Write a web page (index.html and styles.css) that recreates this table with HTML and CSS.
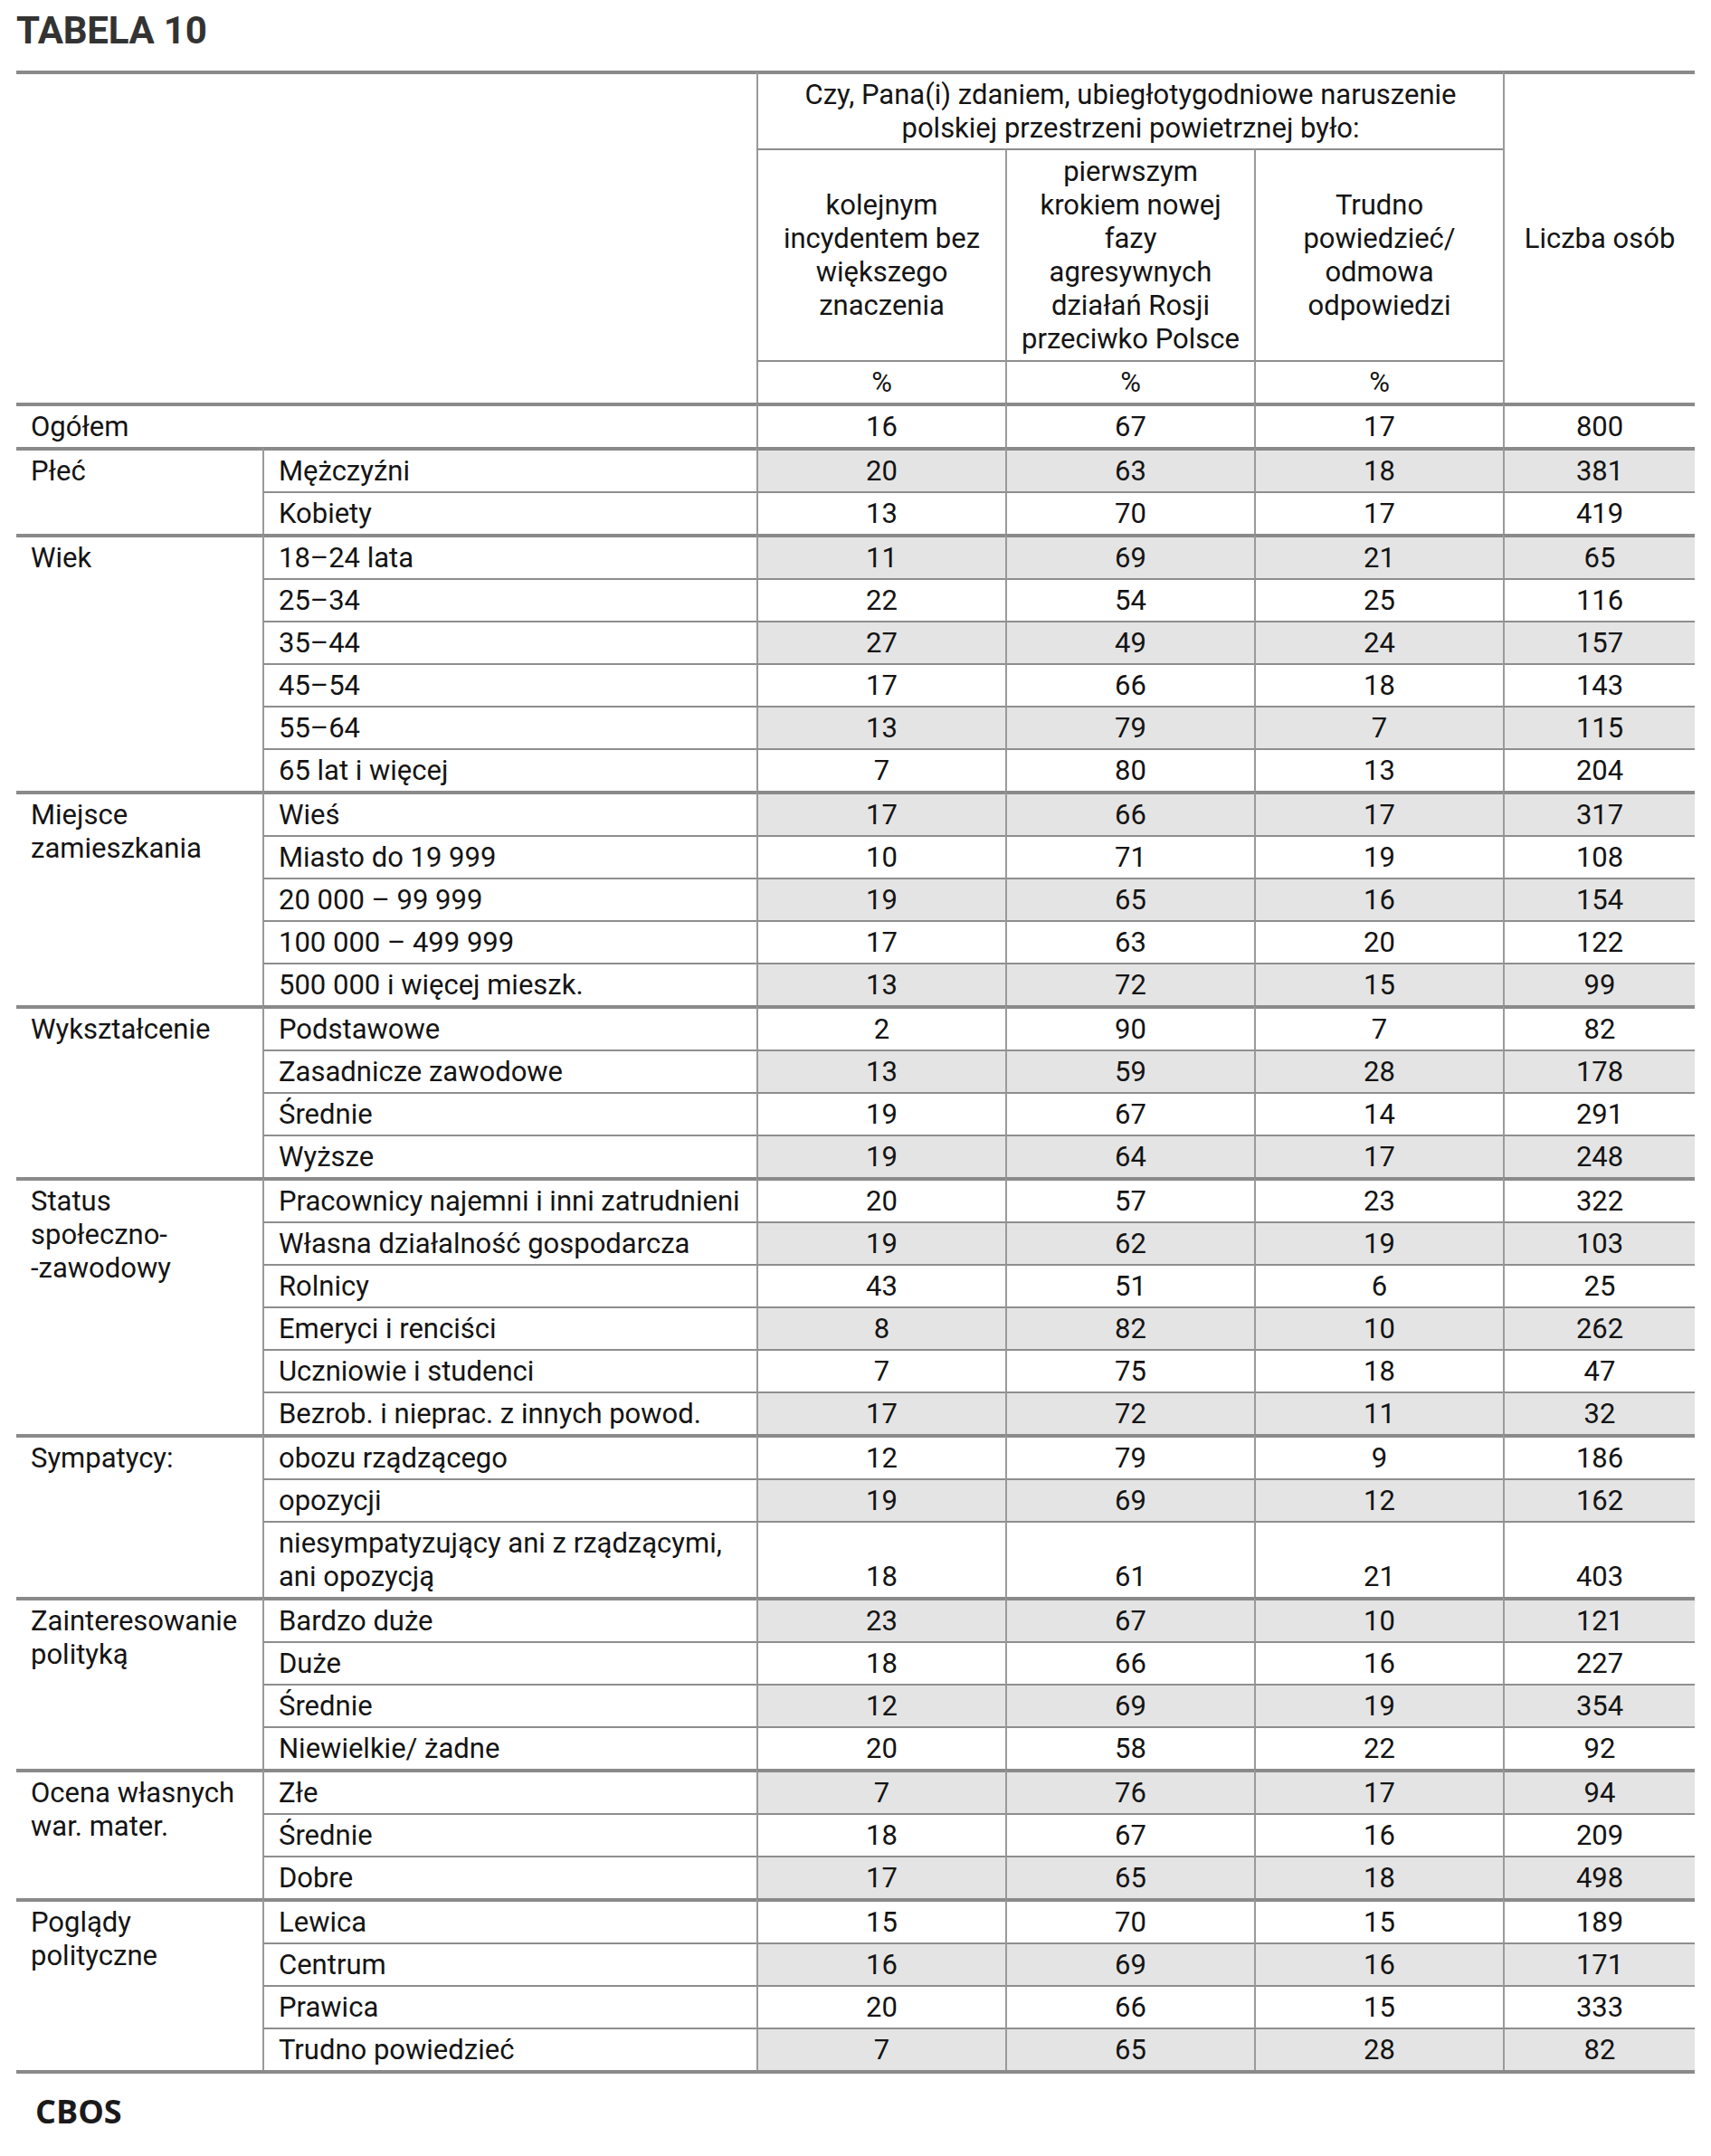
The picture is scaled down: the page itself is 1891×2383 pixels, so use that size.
FILE: index.html
```html
<!DOCTYPE html>
<html lang="pl">
<head>
<meta charset="utf-8">
<title>Tabela 10</title>
<link rel="stylesheet" href="styles.css">
</head>
<body>
<div class="page">
  <h1 class="title">TABELA 10</h1>
  <table class="tbl">
    <colgroup>
      <col class="c-cat">
      <col class="c-sub">
      <col class="c-num">
      <col class="c-num">
      <col class="c-num">
      <col class="c-cnt">
    </colgroup>
    <thead>
      <tr class="h1">
        <th colspan="2" rowspan="3" class="blank"></th>
        <th colspan="3" class="bl q">Czy, Pana(i) zdaniem, ubiegłotygodniowe naruszenie<br>polskiej przestrzeni powietrznej było:</th>
        <th rowspan="3" class="bl cnt">Liczba osób</th>
      </tr>
      <tr class="h2">
        <th class="bl opt">kolejnym<br>incydentem bez<br>większego<br>znaczenia</th>
        <th class="bl opt">pierwszym<br>krokiem nowej<br>fazy<br>agresywnych<br>działań Rosji<br>przeciwko Polsce</th>
        <th class="bl opt">Trudno<br>powiedzieć/<br>odmowa<br>odpowiedzi</th>
      </tr>
      <tr class="h3">
        <th class="bl pct">%</th>
        <th class="bl pct">%</th>
        <th class="bl pct">%</th>
      </tr>
    </thead>
    <tbody>
      <tr class="grp">
        <td colspan="2" class="cat">Ogółem</td>
        <td class="n bl">16</td><td class="n bl">67</td><td class="n bl">17</td><td class="n bl">800</td>
      </tr>

      <tr class="grp sh">
        <td rowspan="2" class="cat">Płeć</td>
        <td class="sub bl">Mężczyźni</td>
        <td class="n bl">20</td><td class="n bl">63</td><td class="n bl">18</td><td class="n bl">381</td>
      </tr>
      <tr>
        <td class="sub bl">Kobiety</td>
        <td class="n bl">13</td><td class="n bl">70</td><td class="n bl">17</td><td class="n bl">419</td>
      </tr>

      <tr class="grp sh">
        <td rowspan="6" class="cat">Wiek</td>
        <td class="sub bl">18–24 lata</td>
        <td class="n bl">11</td><td class="n bl">69</td><td class="n bl">21</td><td class="n bl">65</td>
      </tr>
      <tr>
        <td class="sub bl">25–34</td>
        <td class="n bl">22</td><td class="n bl">54</td><td class="n bl">25</td><td class="n bl">116</td>
      </tr>
      <tr class="sh">
        <td class="sub bl">35–44</td>
        <td class="n bl">27</td><td class="n bl">49</td><td class="n bl">24</td><td class="n bl">157</td>
      </tr>
      <tr>
        <td class="sub bl">45–54</td>
        <td class="n bl">17</td><td class="n bl">66</td><td class="n bl">18</td><td class="n bl">143</td>
      </tr>
      <tr class="sh">
        <td class="sub bl">55–64</td>
        <td class="n bl">13</td><td class="n bl">79</td><td class="n bl">7</td><td class="n bl">115</td>
      </tr>
      <tr>
        <td class="sub bl">65 lat i więcej</td>
        <td class="n bl">7</td><td class="n bl">80</td><td class="n bl">13</td><td class="n bl">204</td>
      </tr>

      <tr class="grp sh">
        <td rowspan="5" class="cat">Miejsce<br>zamieszkania</td>
        <td class="sub bl">Wieś</td>
        <td class="n bl">17</td><td class="n bl">66</td><td class="n bl">17</td><td class="n bl">317</td>
      </tr>
      <tr>
        <td class="sub bl">Miasto do 19 999</td>
        <td class="n bl">10</td><td class="n bl">71</td><td class="n bl">19</td><td class="n bl">108</td>
      </tr>
      <tr class="sh">
        <td class="sub bl">20 000 – 99 999</td>
        <td class="n bl">19</td><td class="n bl">65</td><td class="n bl">16</td><td class="n bl">154</td>
      </tr>
      <tr>
        <td class="sub bl">100 000 – 499 999</td>
        <td class="n bl">17</td><td class="n bl">63</td><td class="n bl">20</td><td class="n bl">122</td>
      </tr>
      <tr class="sh">
        <td class="sub bl">500 000 i więcej mieszk.</td>
        <td class="n bl">13</td><td class="n bl">72</td><td class="n bl">15</td><td class="n bl">99</td>
      </tr>

      <tr class="grp">
        <td rowspan="4" class="cat">Wykształcenie</td>
        <td class="sub bl">Podstawowe</td>
        <td class="n bl">2</td><td class="n bl">90</td><td class="n bl">7</td><td class="n bl">82</td>
      </tr>
      <tr class="sh">
        <td class="sub bl">Zasadnicze zawodowe</td>
        <td class="n bl">13</td><td class="n bl">59</td><td class="n bl">28</td><td class="n bl">178</td>
      </tr>
      <tr>
        <td class="sub bl">Średnie</td>
        <td class="n bl">19</td><td class="n bl">67</td><td class="n bl">14</td><td class="n bl">291</td>
      </tr>
      <tr class="sh">
        <td class="sub bl">Wyższe</td>
        <td class="n bl">19</td><td class="n bl">64</td><td class="n bl">17</td><td class="n bl">248</td>
      </tr>

      <tr class="grp">
        <td rowspan="6" class="cat">Status<br>społeczno-<br>-zawodowy</td>
        <td class="sub bl">Pracownicy najemni i inni zatrudnieni</td>
        <td class="n bl">20</td><td class="n bl">57</td><td class="n bl">23</td><td class="n bl">322</td>
      </tr>
      <tr class="sh">
        <td class="sub bl">Własna działalność gospodarcza</td>
        <td class="n bl">19</td><td class="n bl">62</td><td class="n bl">19</td><td class="n bl">103</td>
      </tr>
      <tr>
        <td class="sub bl">Rolnicy</td>
        <td class="n bl">43</td><td class="n bl">51</td><td class="n bl">6</td><td class="n bl">25</td>
      </tr>
      <tr class="sh">
        <td class="sub bl">Emeryci i renciści</td>
        <td class="n bl">8</td><td class="n bl">82</td><td class="n bl">10</td><td class="n bl">262</td>
      </tr>
      <tr>
        <td class="sub bl">Uczniowie i studenci</td>
        <td class="n bl">7</td><td class="n bl">75</td><td class="n bl">18</td><td class="n bl">47</td>
      </tr>
      <tr class="sh">
        <td class="sub bl">Bezrob. i nieprac. z innych powod.</td>
        <td class="n bl">17</td><td class="n bl">72</td><td class="n bl">11</td><td class="n bl">32</td>
      </tr>

      <tr class="grp">
        <td rowspan="3" class="cat">Sympatycy:</td>
        <td class="sub bl">obozu rządzącego</td>
        <td class="n bl">12</td><td class="n bl">79</td><td class="n bl">9</td><td class="n bl">186</td>
      </tr>
      <tr class="sh">
        <td class="sub bl">opozycji</td>
        <td class="n bl">19</td><td class="n bl">69</td><td class="n bl">12</td><td class="n bl">162</td>
      </tr>
      <tr class="dbl">
        <td class="sub bl">niesympatyzujący ani z rządzącymi,<br>ani opozycją</td>
        <td class="n bl">18</td><td class="n bl">61</td><td class="n bl">21</td><td class="n bl">403</td>
      </tr>

      <tr class="grp sh">
        <td rowspan="4" class="cat">Zainteresowanie<br>polityką</td>
        <td class="sub bl">Bardzo duże</td>
        <td class="n bl">23</td><td class="n bl">67</td><td class="n bl">10</td><td class="n bl">121</td>
      </tr>
      <tr>
        <td class="sub bl">Duże</td>
        <td class="n bl">18</td><td class="n bl">66</td><td class="n bl">16</td><td class="n bl">227</td>
      </tr>
      <tr class="sh">
        <td class="sub bl">Średnie</td>
        <td class="n bl">12</td><td class="n bl">69</td><td class="n bl">19</td><td class="n bl">354</td>
      </tr>
      <tr>
        <td class="sub bl">Niewielkie/ żadne</td>
        <td class="n bl">20</td><td class="n bl">58</td><td class="n bl">22</td><td class="n bl">92</td>
      </tr>

      <tr class="grp sh">
        <td rowspan="3" class="cat">Ocena własnych<br>war. mater.</td>
        <td class="sub bl">Złe</td>
        <td class="n bl">7</td><td class="n bl">76</td><td class="n bl">17</td><td class="n bl">94</td>
      </tr>
      <tr>
        <td class="sub bl">Średnie</td>
        <td class="n bl">18</td><td class="n bl">67</td><td class="n bl">16</td><td class="n bl">209</td>
      </tr>
      <tr class="sh">
        <td class="sub bl">Dobre</td>
        <td class="n bl">17</td><td class="n bl">65</td><td class="n bl">18</td><td class="n bl">498</td>
      </tr>

      <tr class="grp">
        <td rowspan="4" class="cat">Poglądy<br>polityczne</td>
        <td class="sub bl">Lewica</td>
        <td class="n bl">15</td><td class="n bl">70</td><td class="n bl">15</td><td class="n bl">189</td>
      </tr>
      <tr class="sh">
        <td class="sub bl">Centrum</td>
        <td class="n bl">16</td><td class="n bl">69</td><td class="n bl">16</td><td class="n bl">171</td>
      </tr>
      <tr>
        <td class="sub bl">Prawica</td>
        <td class="n bl">20</td><td class="n bl">66</td><td class="n bl">15</td><td class="n bl">333</td>
      </tr>
      <tr class="sh">
        <td class="sub bl">Trudno powiedzieć</td>
        <td class="n bl">7</td><td class="n bl">65</td><td class="n bl">28</td><td class="n bl">82</td>
      </tr>
    </tbody>
  </table>
  <div class="source">CBOS</div>
</div>
</body>
</html>
```

FILE: styles.css
```css
html, body {
  margin: 0;
  padding: 0;
  background: #ffffff;
}

.page {
  padding: 9px 0 40px 18px;
}

.title {
  margin: 0 0 20px 0;
  font-family: Roboto, "Liberation Sans", sans-serif;
  font-weight: 700;
  font-size: 42px;
  line-height: 49px;
  color: #333333;
  letter-spacing: -0.2px;
}

.tbl {
  border-collapse: separate;
  border-spacing: 0;
  table-layout: fixed;
  width: 1855px;
  border-bottom: 4px solid #8a8a8a;
}

.c-cat { width: 272px; }
.c-sub { width: 546px; }
.c-num { width: 275px; }
.c-cnt { width: 212px; }

.tbl th,
.tbl td {
  font-family: Roboto, "Liberation Sans", sans-serif;
  font-weight: 400;
  font-size: 31px;
  line-height: 37px;
  color: #141414;
  padding: 4px 0;
  border-top: 2px solid #8e8e8e;
  vertical-align: middle;
  text-align: center;
}

.tbl .bl {
  border-left: 2px solid #9a9a9a;
}

.tbl .h1 th {
  border-top: 4px solid #8a8a8a;
}

.tbl .opt {
  padding: 5px 0;
}

.tbl .grp td {
  border-top: 4px solid #8a8a8a;
}

.tbl .cat {
  text-align: left;
  vertical-align: top;
  padding-left: 16px;
}

.tbl .grp td[colspan] {
  vertical-align: middle;
}

.tbl .sub {
  text-align: left;
  padding-left: 16px;
}

.tbl .sh .n {
  background: #e4e4e4;
}

.tbl .dbl .n {
  vertical-align: bottom;
}

.source {
  margin: 20px 0 0 21px;
  font-family: "Open Sans", "Liberation Sans", sans-serif;
  font-weight: 700;
  font-size: 36px;
  line-height: 44px;
  color: #1a1a1a;
}
```
